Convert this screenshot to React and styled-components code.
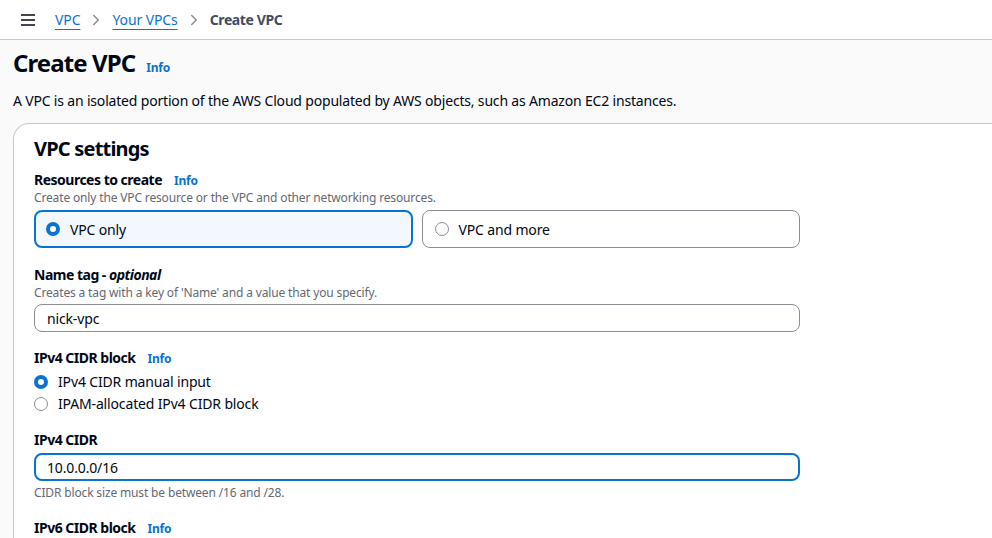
import React from "react";
import styled, { createGlobalStyle } from "styled-components";

const Global = createGlobalStyle`
  html, body { margin: 0; padding: 0; }
  body {
    background: #fafafa;
    font-family: "Noto Sans", "Open Sans", Arial, sans-serif;
    color: #000716;
    overflow: hidden;
  }
`;

const Page = styled.div`
  width: 992px;
  height: 538px;
  overflow: hidden;
`;

const TopBar = styled.header`
  height: 40px;
  background: #ffffff;
  border-bottom: 1px solid #c6c6cd;
  display: flex;
  align-items: center;
  padding-left: 20px;
  box-sizing: border-box;
`;

const MenuButton = styled.div`
  width: 16px;
  height: 16px;
  display: flex;
  align-items: center;
  justify-content: center;
  margin-right: 19px;
  color: #424650;
`;

const Crumbs = styled.nav`
  display: flex;
  align-items: center;
  font-size: 14px;
`;

const CrumbLink = styled.a`
  color: #0972d3;
  text-decoration: underline;
  text-underline-offset: 4px;
  text-decoration-thickness: 1px;
  line-height: 20px;
  letter-spacing: -0.1px;
`;

const CrumbCurrent = styled.span`
  color: #414d5c;
  font-weight: 700;
  line-height: 20px;
  letter-spacing: -0.4px;
`;

const Sep = styled.span`
  display: flex;
  align-items: center;
  margin: 0 10px;
  color: #8c8c94;
`;

const Content = styled.main`
  padding: 0 0 0 13px;
`;

const TitleRow = styled.div`
  display: flex;
  align-items: baseline;
  gap: 11px;
  margin-top: 8px;
`;

const Title = styled.h1`
  margin: 0;
  font-size: 24px;
  line-height: 30px;
  font-weight: 700;
  letter-spacing: -0.9px;
`;

const Info = styled.a`
  color: #0972d3;
  font-size: 12px;
  font-weight: 700;
  line-height: 16px;
  letter-spacing: -0.2px;
  margin-left: ${(p) => p.$gap || 0}px;
`;

const Lead = styled.p`
  margin: 13px 0 0 0;
  font-size: 14px;
  line-height: 20px;
  letter-spacing: -0.18px;
`;

const Card = styled.section`
  margin-top: 12px;
  background: #ffffff;
  border: 1px solid #c6c6cd;
  border-right: none;
  border-radius: 16px 0 0 0;
  padding: 12px 20px 20px 20px;
  height: 600px;
  box-sizing: border-box;
`;

const CardTitle = styled.h2`
  margin: 0;
  font-size: 20px;
  line-height: 26px;
  font-weight: 700;
  letter-spacing: -0.8px;
`;

const Field = styled.div`
  width: 766px;
  margin-top: ${(p) => p.$top || 0}px;
`;

const LabelRow = styled.div`
  display: flex;
  align-items: baseline;
`;

const Label = styled.span`
  font-size: 14px;
  font-weight: 700;
  line-height: 20px;
  letter-spacing: -0.5px;
  em { font-style: italic; }
`;

const Hint = styled.div`
  font-size: 12px;
  line-height: 16px;
  color: #656871;
  letter-spacing: -0.15px;
`;

const Tiles = styled.div`
  display: grid;
  grid-template-columns: 1fr 1fr;
  gap: 9px;
  margin-top: 4px;
`;

const Tile = styled.div`
  height: 38px;
  box-sizing: border-box;
  border-radius: 8px;
  border: ${(p) => (p.$on ? "2px solid #0972d3" : "1px solid #8c8c94")};
  background: ${(p) => (p.$on ? "#f2f8fd" : "#ffffff")};
  display: flex;
  align-items: center;
  padding-left: ${(p) => (p.$on ? 10 : 12)}px;
  gap: 10px;
  font-size: 14px;
  letter-spacing: -0.15px;
`;

const RadioDot = styled.span`
  width: 14px;
  height: 14px;
  border-radius: 50%;
  box-sizing: border-box;
  flex: none;
  border: ${(p) => (p.$on ? "4px solid #0972d3" : "1px solid #8c8c94")};
  background: #ffffff;
`;

const Input = styled.div`
  margin-top: 3px;
  height: 28px;
  box-sizing: border-box;
  border-radius: 8px;
  border: ${(p) => (p.$focus ? "2px solid #0972d3" : "1px solid #8c8c94")};
  background: #ffffff;
  display: flex;
  align-items: center;
  padding-left: ${(p) => (p.$focus ? 11 : 12)}px;
  font-size: 14px;
  letter-spacing: -0.15px;
  color: #000716;
`;

const RadioList = styled.div`
  display: flex;
  flex-direction: column;
  gap: 2px;
  margin-top: 4px;
`;

const RadioRow = styled.label`
  display: flex;
  align-items: center;
  gap: 10px;
  font-size: 14px;
  line-height: 20px;
  letter-spacing: -0.15px;
`;

const HintBelow = styled(Hint)`
  margin-top: 4px;
`;

const Chevron = () => (
  <svg width="12" height="12" viewBox="0 0 16 16" fill="none">
    <path d="M5 2l6 6-6 6" stroke="currentColor" strokeWidth="2" strokeLinejoin="round" strokeLinecap="round" />
  </svg>
);

const Hamburger = () => (
  <svg width="16" height="16" viewBox="0 0 16 16" fill="none">
    <path d="M1 3h14M1 8h14M1 13h14" stroke="currentColor" strokeWidth="2" />
  </svg>
);

export default function App() {
  return (
    <Page>
      <Global />
      <TopBar>
        <MenuButton><Hamburger /></MenuButton>
        <Crumbs>
          <CrumbLink>VPC</CrumbLink>
          <Sep><Chevron /></Sep>
          <CrumbLink>Your VPCs</CrumbLink>
          <Sep><Chevron /></Sep>
          <CrumbCurrent>Create VPC</CrumbCurrent>
        </Crumbs>
      </TopBar>
      <Content>
        <TitleRow>
          <Title>Create VPC</Title>
          <Info>Info</Info>
        </TitleRow>
        <Lead>A VPC is an isolated portion of the AWS Cloud populated by AWS objects, such as Amazon EC2 instances.</Lead>
        <Card>
          <CardTitle>VPC settings</CardTitle>
          <Field $top={8}>
            <LabelRow>
              <Label>Resources to create</Label>
              <Info $gap={12}>Info</Info>
            </LabelRow>
            <Hint>Create only the VPC resource or the VPC and other networking resources.</Hint>
            <Tiles>
              <Tile $on><RadioDot $on />VPC only</Tile>
              <Tile><RadioDot />VPC and more</Tile>
            </Tiles>
          </Field>
          <Field $top={15}>
            <Label>Name tag - <em>optional</em></Label>
            <Hint>Creates a tag with a key of 'Name' and a value that you specify.</Hint>
            <Input>nick-vpc</Input>
          </Field>
          <Field $top={16}>
            <LabelRow>
              <Label>IPv4 CIDR block</Label>
              <Info $gap={12}>Info</Info>
            </LabelRow>
            <RadioList>
              <RadioRow><RadioDot $on />IPv4 CIDR manual input</RadioRow>
              <RadioRow><RadioDot />IPAM-allocated IPv4 CIDR block</RadioRow>
            </RadioList>
          </Field>
          <Field $top={14}>
            <Label>IPv4 CIDR</Label>
            <Input $focus>10.0.0.0/16</Input>
            <HintBelow>CIDR block size must be between /16 and /28.</HintBelow>
          </Field>
          <Field $top={17}>
            <LabelRow>
              <Label>IPv6 CIDR block</Label>
              <Info $gap={12}>Info</Info>
            </LabelRow>
          </Field>
        </Card>
      </Content>
    </Page>
  );
}
